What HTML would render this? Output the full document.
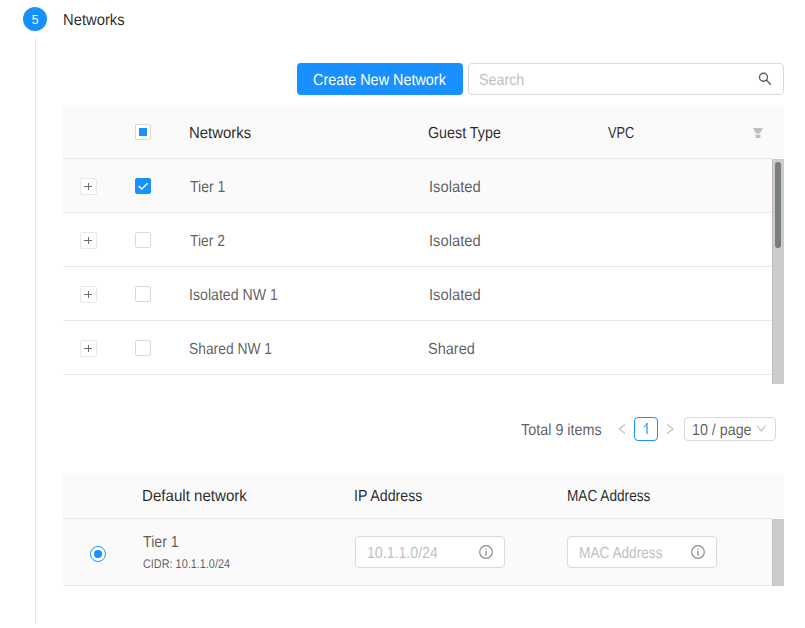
<!DOCTYPE html>
<html><head><meta charset="utf-8">
<style>
*{margin:0;padding:0;box-sizing:border-box}
html,body{width:805px;height:628px;overflow:hidden;background:#fff}
body{position:relative;font-family:"Liberation Sans",sans-serif;font-size:15px;color:rgba(0,0,0,0.65)}
.a{position:absolute}
.t{position:absolute;white-space:nowrap;transform-origin:0 0;text-rendering:geometricPrecision}
.h{color:rgba(0,0,0,0.85)}
.w{color:#fff}
.ph{color:#bfbfbf}
.vline{position:absolute;left:35px;width:1px;background:#e8e8e8}
.circle{left:23px;top:7px;width:24px;height:24px;border-radius:50%;background:#1890ff;color:#fff;font-size:12px;line-height:26px;text-align:center}
.btn{left:297px;top:63px;width:166px;height:32px;border-radius:4px;background:#1890ff}
.search{left:468px;top:63px;width:316px;height:32px;border:1px solid #d9d9d9;border-radius:4px;background:#fff}
.thead{left:63px;top:105px;width:721px;height:53px;background:#fafafa}
.hline{position:absolute;height:1px;background:#e8e8e8}
.cb{position:absolute;width:16px;height:16px;border:1px solid #d9d9d9;border-radius:2px;background:#fff}
.cb.on{background:#1890ff;border-color:#1890ff}
.exp{position:absolute;width:17px;height:17px;border:1px solid #e8e8e8;border-radius:2px;background:#fff}
.exp:before{content:"";position:absolute;left:3px;top:7px;width:8px;height:1px;background:#6e6e6e}
.exp:after{content:"";position:absolute;left:7px;top:4px;width:1px;height:7px;background:#6e6e6e}
.track{position:absolute;left:772px;width:12px;background:#cccccc;border-left:1px solid #c4bab2}
.thumb{position:absolute;left:775px;top:162px;width:6px;height:86px;border-radius:3px;background:#797d7d}
.inp{position:absolute;width:150px;height:32px;border:1px solid #d9d9d9;border-radius:4px;background:#fff}
</style></head><body>
<div class="vline" style="top:0;height:1px"></div>
<div class="vline" style="top:37px;height:587px"></div>
<div class="a circle">5</div>

<div class="a btn"></div>
<div class="a search"></div>
<svg class="a" style="left:758px;top:72px" width="14" height="14" viewBox="0 0 14 14"><circle cx="5.5" cy="5.2" r="4" fill="none" stroke="rgba(0,0,0,0.65)" stroke-width="1.35"/><line x1="8.4" y1="8.1" x2="12.4" y2="12.2" stroke="rgba(0,0,0,0.65)" stroke-width="1.35" stroke-linecap="round"/></svg>

<!-- table 1 -->
<div class="a thead"></div>
<div class="hline" style="left:63px;top:158px;width:709px"></div>
<div class="cb" style="left:135px;top:124px"></div>
<div class="a" style="left:139px;top:128px;width:8px;height:8px;background:#1890ff"></div>
<svg class="a" style="left:753px;top:128px" width="10" height="10" viewBox="0 0 10 10"><path d="M0 0H10L7 5.5H3Z" fill="#bfbfbf"/><rect x="2.6" y="6.7" width="4.8" height="3.3" fill="#bfbfbf"/></svg>

<div class="a" style="left:63px;top:159px;width:709px;height:53px;background:#fafafa"></div>
<div class="hline" style="left:63px;top:212px;width:709px"></div>
<div class="hline" style="left:63px;top:266px;width:709px"></div>
<div class="hline" style="left:63px;top:320px;width:709px"></div>
<div class="hline" style="left:63px;top:374px;width:709px"></div>

<div class="exp" style="left:80px;top:178px"></div>
<div class="exp" style="left:80px;top:232px"></div>
<div class="exp" style="left:80px;top:286px"></div>
<div class="exp" style="left:80px;top:340px"></div>

<div class="cb on" style="left:135px;top:178px"></div>
<svg class="a" style="left:135px;top:178px" width="16" height="16" viewBox="0 0 16 16"><path d="M3.6 8L6.8 11L12.6 5.2" fill="none" stroke="#fff" stroke-width="1.5"/></svg>
<div class="cb" style="left:135px;top:232px"></div>
<div class="cb" style="left:135px;top:286px"></div>
<div class="cb" style="left:135px;top:340px"></div>

<div class="track" style="top:159px;height:225px"></div>
<div class="thumb"></div>

<!-- pagination -->
<svg class="a" style="left:618px;top:423px" width="8" height="12" viewBox="0 0 8 12"><path d="M7 1.5L1.3 6L7 10.5" fill="none" stroke="rgba(0,0,0,0.25)" stroke-width="1.2"/></svg>
<div class="a" style="left:634px;top:417px;width:24px;height:24px;border:1px solid #1890ff;border-radius:4px"></div>
<svg class="a" style="left:640px;top:420px" width="12" height="16" viewBox="0 0 12 16"><path d="M7 3V14" stroke="#1890ff" stroke-width="1.15" fill="none"/><path d="M4 7.4L7.2 3.3" stroke="#1890ff" stroke-width="1" fill="none"/></svg>
<svg class="a" style="left:666px;top:423px" width="8" height="12" viewBox="0 0 8 12"><path d="M1.3 1.5L7 6L1.3 10.5" fill="none" stroke="rgba(0,0,0,0.25)" stroke-width="1.2"/></svg>
<div class="a" style="left:684px;top:417px;width:92px;height:24px;border:1px solid #d9d9d9;border-radius:4px"></div>
<svg class="a" style="left:756px;top:424px" width="11" height="9" viewBox="0 0 11 9"><path d="M1 1.5L5.3 7L9.6 1.5" fill="none" stroke="rgba(0,0,0,0.25)" stroke-width="1.2"/></svg>

<!-- table 2 -->
<div class="a" style="left:63px;top:473px;width:721px;height:45px;background:#fafafa"></div>
<div class="hline" style="left:63px;top:518px;width:709px"></div>
<div class="a" style="left:63px;top:519px;width:709px;height:66px;background:#fafafa"></div>
<div class="hline" style="left:63px;top:585px;width:709px"></div>
<div class="track" style="top:519px;height:67px"></div>

<div class="a" style="left:90px;top:546px;width:16px;height:16px;border:1px solid #1890ff;border-radius:50%;background:#fff"></div>
<div class="a" style="left:94px;top:550px;width:8px;height:8px;border-radius:50%;background:#1890ff"></div>

<div class="inp" style="left:355px;top:536px"></div>
<svg class="a" style="left:479px;top:545px" width="14" height="14" viewBox="0 0 14 14"><circle cx="7" cy="7" r="6.3" fill="none" stroke="rgba(0,0,0,0.45)" stroke-width="1.2"/><rect x="6.3" y="6" width="1.4" height="4.5" fill="rgba(0,0,0,0.45)"/><circle cx="7" cy="4.2" r="0.8" fill="rgba(0,0,0,0.45)"/></svg>
<div class="inp" style="left:567px;top:536px"></div>
<svg class="a" style="left:691px;top:545px" width="14" height="14" viewBox="0 0 14 14"><circle cx="7" cy="7" r="6.3" fill="none" stroke="rgba(0,0,0,0.45)" stroke-width="1.2"/><rect x="6.3" y="6" width="1.4" height="4.5" fill="rgba(0,0,0,0.45)"/><circle cx="7" cy="4.2" r="0.8" fill="rgba(0,0,0,0.45)"/></svg>
<div class="t h" style="left:63.08px;top:13px;font-size:16px;line-height:16px;transform:scaleX(0.9242)">Networks</div>
<div class="t w" style="left:312.80px;top:73px;font-size:16px;line-height:16px;transform:scaleX(0.9000)">Create New Network</div>
<div class="t ph" style="left:479.11px;top:73px;font-size:16px;line-height:16px;transform:scaleX(0.8918)">Search</div>
<div class="t h" style="left:188.77px;top:126px;font-size:16px;line-height:16px;transform:scaleX(0.9333)">Networks</div>
<div class="t h" style="left:428.11px;top:126px;font-size:16px;line-height:16px;transform:scaleX(0.8938)">Guest Type</div>
<div class="t h" style="left:608.40px;top:126px;font-size:16px;line-height:16px;transform:scaleX(0.8000)">VPC</div>
<div class="t " style="left:189.70px;top:180px;font-size:16px;line-height:16px;transform:scaleX(0.8750)">Tier 1</div>
<div class="t " style="left:190.00px;top:234px;font-size:16px;line-height:16px;transform:scaleX(0.8650)">Tier 2</div>
<div class="t " style="left:188.52px;top:288px;font-size:16px;line-height:16px;transform:scaleX(0.8848)">Isolated NW 1</div>
<div class="t " style="left:188.54px;top:342px;font-size:16px;line-height:16px;transform:scaleX(0.8642)">Shared NW 1</div>
<div class="t " style="left:428.58px;top:180px;font-size:16px;line-height:16px;transform:scaleX(0.9218)">Isolated</div>
<div class="t " style="left:428.58px;top:234px;font-size:16px;line-height:16px;transform:scaleX(0.9218)">Isolated</div>
<div class="t " style="left:428.58px;top:288px;font-size:16px;line-height:16px;transform:scaleX(0.9218)">Isolated</div>
<div class="t " style="left:428.39px;top:342px;font-size:16px;line-height:16px;transform:scaleX(0.9080)">Shared</div>
<div class="t " style="left:520.80px;top:423px;font-size:16px;line-height:16px;transform:scaleX(0.8989)">Total 9 items</div>
<div class="t " style="left:691.71px;top:423px;font-size:16px;line-height:16px;transform:scaleX(0.8923)">10 / page</div>
<div class="t h" style="left:141.56px;top:489px;font-size:16px;line-height:16px;transform:scaleX(0.9436)">Default network</div>
<div class="t h" style="left:354.31px;top:489px;font-size:16px;line-height:16px;transform:scaleX(0.8882)">IP Address</div>
<div class="t h" style="left:567.15px;top:489px;font-size:16px;line-height:16px;transform:scaleX(0.8526)">MAC Address</div>
<div class="t " style="left:142.50px;top:535px;font-size:16px;line-height:16px;transform:scaleX(0.8875)">Tier 1</div>
<div class="t " style="left:142.50px;top:558px;font-size:12.6px;line-height:12.6px;transform:scaleX(0.8634)">CIDR: 10.1.1.0/24</div>
<div class="t ph" style="left:367.12px;top:546px;font-size:16px;line-height:16px;transform:scaleX(0.8848)">10.1.1.0/24</div>
<div class="t ph" style="left:579.15px;top:546px;font-size:16px;line-height:16px;transform:scaleX(0.8536)">MAC Address</div>
</body></html>
